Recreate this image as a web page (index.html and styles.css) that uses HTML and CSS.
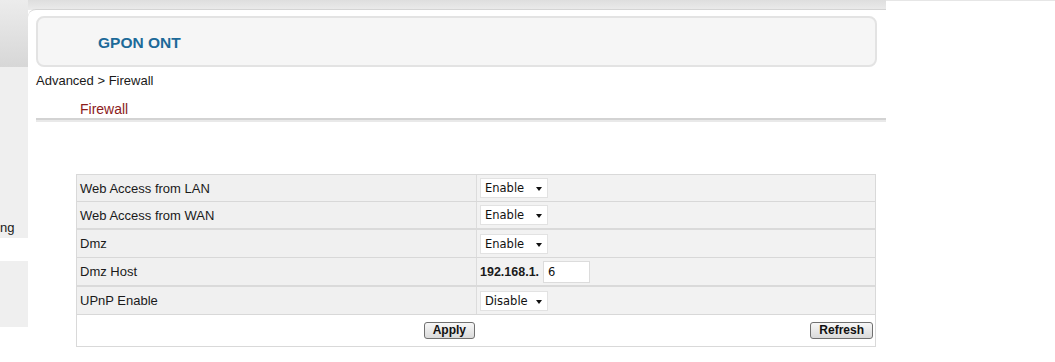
FILE: index.html
```html
<!DOCTYPE html>
<html lang="en">
<head>
    <meta charset="UTF-8">
    <title>GPON ONT - Firewall</title>
    <link rel="stylesheet" href="styles.css">
</head>
<body>
    <div class="page">
        <!-- Left menu, mostly scrolled out of view -->
        <aside class="sidebar">
            <div class="side-top"></div>
            <div class="side-item"><span>ng</span></div>
            <div class="side-item side-item-low"></div>
        </aside>

        <div class="content">
            <div class="panel">
                <div class="banner">
                    <span class="brand">GPON ONT</span>
                </div>
                <div class="crumb">Advanced &gt; Firewall</div>
                <h2 class="page-title">Firewall</h2>
                <div class="divider"></div>

                <form class="settings" action="#" method="post">
                    <div class="row">
                        <div class="label">Web Access from LAN</div>
                        <div class="value">
                            <span class="select-wrap">
                                <select name="lan_access"><option>Enable</option><option>Disable</option></select>
                            </span>
                        </div>
                    </div>
                    <div class="row group-end">
                        <div class="label">Web Access from WAN</div>
                        <div class="value">
                            <span class="select-wrap">
                                <select name="wan_access"><option>Enable</option><option>Disable</option></select>
                            </span>
                        </div>
                    </div>
                    <div class="row tall">
                        <div class="label">Dmz</div>
                        <div class="value">
                            <span class="select-wrap">
                                <select name="dmz"><option>Enable</option><option>Disable</option></select>
                            </span>
                        </div>
                    </div>
                    <div class="row tall group-end">
                        <div class="label">Dmz Host</div>
                        <div class="value">
                            <span class="ip-prefix">192.168.1.</span>
                            <input type="text" name="dmz_host" class="ip-input" value="6">
                        </div>
                    </div>
                    <div class="row tall">
                        <div class="label">UPnP Enable</div>
                        <div class="value">
                            <span class="select-wrap">
                                <select name="upnp"><option>Disable</option><option>Enable</option></select>
                            </span>
                        </div>
                    </div>
                    <div class="buttons">
                        <div class="btn-cell btn-left"><button type="submit" class="btn">Apply</button></div>
                        <div class="btn-cell btn-right"><button type="button" class="btn">Refresh</button></div>
                    </div>
                </form>
            </div>
        </div>
    </div>
</body>
</html>
```

FILE: styles.css
```css
/* Global styles */
body {
    margin: 0;
    padding: 0;
    font-family: "Liberation Sans", Arial, sans-serif;
    font-size: 13px;
    color: #1a1a1a;
    background: linear-gradient(#e6e6e6, #e6e6e6) top / 100% 1px no-repeat, #fff;
}

.page {
    display: flex;
    align-items: flex-start;
}

/* Sidebar */
.sidebar {
    width: 28px;
    flex-shrink: 0;
    display: flex;
    flex-direction: column;
}

.side-top {
    height: 67px;
    background: linear-gradient(#ececec, #d7d7d7);
}

.side-item {
    height: 171px;
    background-color: #efefef;
    display: flex;
    justify-content: flex-start;
    align-items: flex-end;
    padding: 0 0 3px 0;
    box-sizing: border-box;
    overflow: hidden;
    white-space: nowrap;
    line-height: 15px;
}

.side-item-low {
    height: 66px;
    margin-top: 23px;
}

/* Main content */
.content {
    width: 858px;
    flex-shrink: 0;
    background: linear-gradient(#dedede, #ebebeb) top / 100% 10px no-repeat;
}

.panel {
    margin-top: 9px;
    padding: 0 0 20px 8px;
    background-color: #fff;
    border-top: 1px solid #d4d4d4;
    border-top-left-radius: 8px;
}

.banner {
    height: 51px;
    margin: 6px 9px 0 0;
    padding: 3px 0 0 60px;
    box-sizing: border-box;
    display: flex;
    align-items: center;
    background-color: #f6f6f6;
    border: 2px solid #e3e3e3;
    border-radius: 8px;
}

.brand {
    font-size: 15.5px;
    font-weight: bold;
    color: #1d6a99;
}

.crumb {
    margin-top: 5px;
    line-height: 18px;
}

.page-title {
    margin: 10px 0 0 44px;
    font-size: 14px;
    font-weight: normal;
    line-height: 18px;
    color: #8c1c1c;
}

.divider {
    margin-top: 0;
    border-top: 2px solid #d3d3d3;
    border-bottom: 2px solid #e9e9e9;
}

/* Settings table */
.settings {
    width: 800px;
    margin: 52px 0 0 40px;
    border: 1px solid #d9d9d9;
    box-sizing: border-box;
}

.row {
    display: grid;
    grid-template-columns: 399px 1fr;
    height: 27px;
    border-bottom: 1px solid #d8d8d8;
    box-sizing: border-box;
}

.row.tall {
    height: 28px;
}

.row.group-end {
    height: 28px;
    border-bottom: 2px solid #dadada;
}

.row.tall.group-end {
    height: 29px;
}

.label {
    display: flex;
    align-items: center;
    padding-left: 3px;
    background-color: #f0f0f0;
}

.value {
    display: flex;
    align-items: center;
    padding-left: 3px;
    background-color: #f2f2f2;
    border-left: 1px solid #dcdcdc;
}

.select-wrap {
    position: relative;
    display: inline-block;
    height: 20px;
}

.select-wrap select {
    appearance: none;
    -webkit-appearance: none;
    width: 68px;
    height: 20px;
    margin: 0;
    padding: 0 0 0 4px;
    border: 1px solid #e2e2e2;
    border-radius: 0;
    background-color: #fff;
    font-family: "DejaVu Sans", Tahoma, sans-serif;
    font-size: 11.5px;
    color: #111;
}

/* small black dropdown arrow */
.select-wrap::after {
    content: "";
    position: absolute;
    right: 6px;
    top: 9px;
    border-left: 3.5px solid transparent;
    border-right: 3.5px solid transparent;
    border-top: 4px solid #111;
    pointer-events: none;
}

.ip-prefix {
    font-weight: bold;
    font-size: 12.5px;
}

.ip-input {
    width: 47px;
    height: 22px;
    margin-left: 4px;
    padding: 0 0 0 4px;
    box-sizing: border-box;
    border: 1px solid #dcdcdc;
    font-family: "DejaVu Sans", Tahoma, sans-serif;
    font-size: 11.5px;
    color: #111;
}

/* Buttons row */
.buttons {
    display: grid;
    grid-template-columns: 1fr 1fr;
    align-items: center;
    height: 31px;
    background-color: #fff;
}

.btn-cell {
    display: flex;
    justify-content: flex-end;
}

.btn-left {
    padding-right: 1px;
}

.btn-right {
    padding-right: 2px;
}

.btn {
    height: 17px;
    padding: 0 8px;
    border: 1px solid #707070;
    border-radius: 3px;
    background: linear-gradient(#f7f7f7, #dadada);
    font-family: "Liberation Sans", Arial, sans-serif;
    font-size: 12px;
    font-weight: bold;
    line-height: 15px;
    color: #111;
    cursor: pointer;
}
```
